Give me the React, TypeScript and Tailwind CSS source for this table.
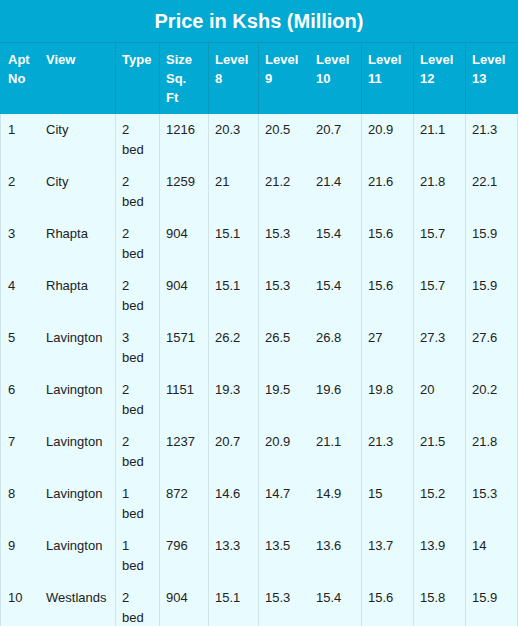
const rows: string[][] = [
  ["1", "City", "2", "1216", "20.3", "20.5", "20.7", "20.9", "21.1", "21.3"],
  ["2", "City", "2", "1259", "21", "21.2", "21.4", "21.6", "21.8", "22.1"],
  ["3", "Rhapta", "2", "904", "15.1", "15.3", "15.4", "15.6", "15.7", "15.9"],
  ["4", "Rhapta", "2", "904", "15.1", "15.3", "15.4", "15.6", "15.7", "15.9"],
  ["5", "Lavington", "3", "1571", "26.2", "26.5", "26.8", "27", "27.3", "27.6"],
  ["6", "Lavington", "2", "1151", "19.3", "19.5", "19.6", "19.8", "20", "20.2"],
  ["7", "Lavington", "2", "1237", "20.7", "20.9", "21.1", "21.3", "21.5", "21.8"],
  ["8", "Lavington", "1", "872", "14.6", "14.7", "14.9", "15", "15.2", "15.3"],
  ["9", "Lavington", "1", "796", "13.3", "13.5", "13.6", "13.7", "13.9", "14"],
  ["10", "Westlands", "2", "904", "15.1", "15.3", "15.4", "15.6", "15.8", "15.9"],
];

const headers: string[][] = [
  ["Apt", "No"],
  ["View"],
  ["Type"],
  ["Size", "Sq.", "Ft"],
  ["Level", "8"],
  ["Level", "9"],
  ["Level", "10"],
  ["Level", "11"],
  ["Level", "12"],
  ["Level", "13"],
];

// which columns carry a left rule (the source table is inconsistent)
const ruled = [true, false, true, true, true, true, false, true, true, true];

const grid = "grid grid-cols-[39px_76px_44px_49px_50px_51px_52px_52px_52px_53px]";

export default function App() {
  return (
    <div className="w-[518px] bg-white" style={{ fontFamily: '"Liberation Sans", Arial, sans-serif' }}>
      <div className="h-[43px] bg-[#02a9d3] border-b border-[#0a98bd] flex items-center justify-center text-white font-bold text-[20px]">
        Price in Kshs (Million)
      </div>

      <div className={`${grid} bg-[#02a9d3] text-white font-bold text-[13px] leading-[19px]`}>
        {headers.map((h, i) => (
          <div
            key={i}
            className={`h-[71px] py-[7px] ${
              i === 0
                ? "border-l border-[#02a9d3] pl-[7px]"
                : ruled[i]
                ? "border-l border-[#0a98bd] pl-[6px]"
                : "pl-[7px]"
            } ${i === 9 ? "border-r border-r-[#02a9d3]" : ""}`}
          >
            {h.map((w, j) => (
              <div key={j}>{w}</div>
            ))}
          </div>
        ))}
      </div>

      {rows.map((r, ri) => (
        <div key={ri} className={`${grid} bg-[#e8fbff] text-[#222] text-[13px] leading-[20px]`}>
          {r.map((c, i) => (
            <div
              key={i}
              className={`h-[52px] py-[6px] ${
                i === 0
                  ? "border-l border-[#cfe4ea] pl-[7px]"
                  : ruled[i]
                  ? "border-l border-[#cfe4ea] pl-[6px]"
                  : "pl-[7px]"
              } ${i === 9 ? "border-r border-r-[#cfe4ea]" : ""}`}
            >
              {i === 2 ? (
                <>
                  <div>{c}</div>
                  <div>bed</div>
                </>
              ) : (
                c
              )}
            </div>
          ))}
        </div>
      ))}
    </div>
  );
}
